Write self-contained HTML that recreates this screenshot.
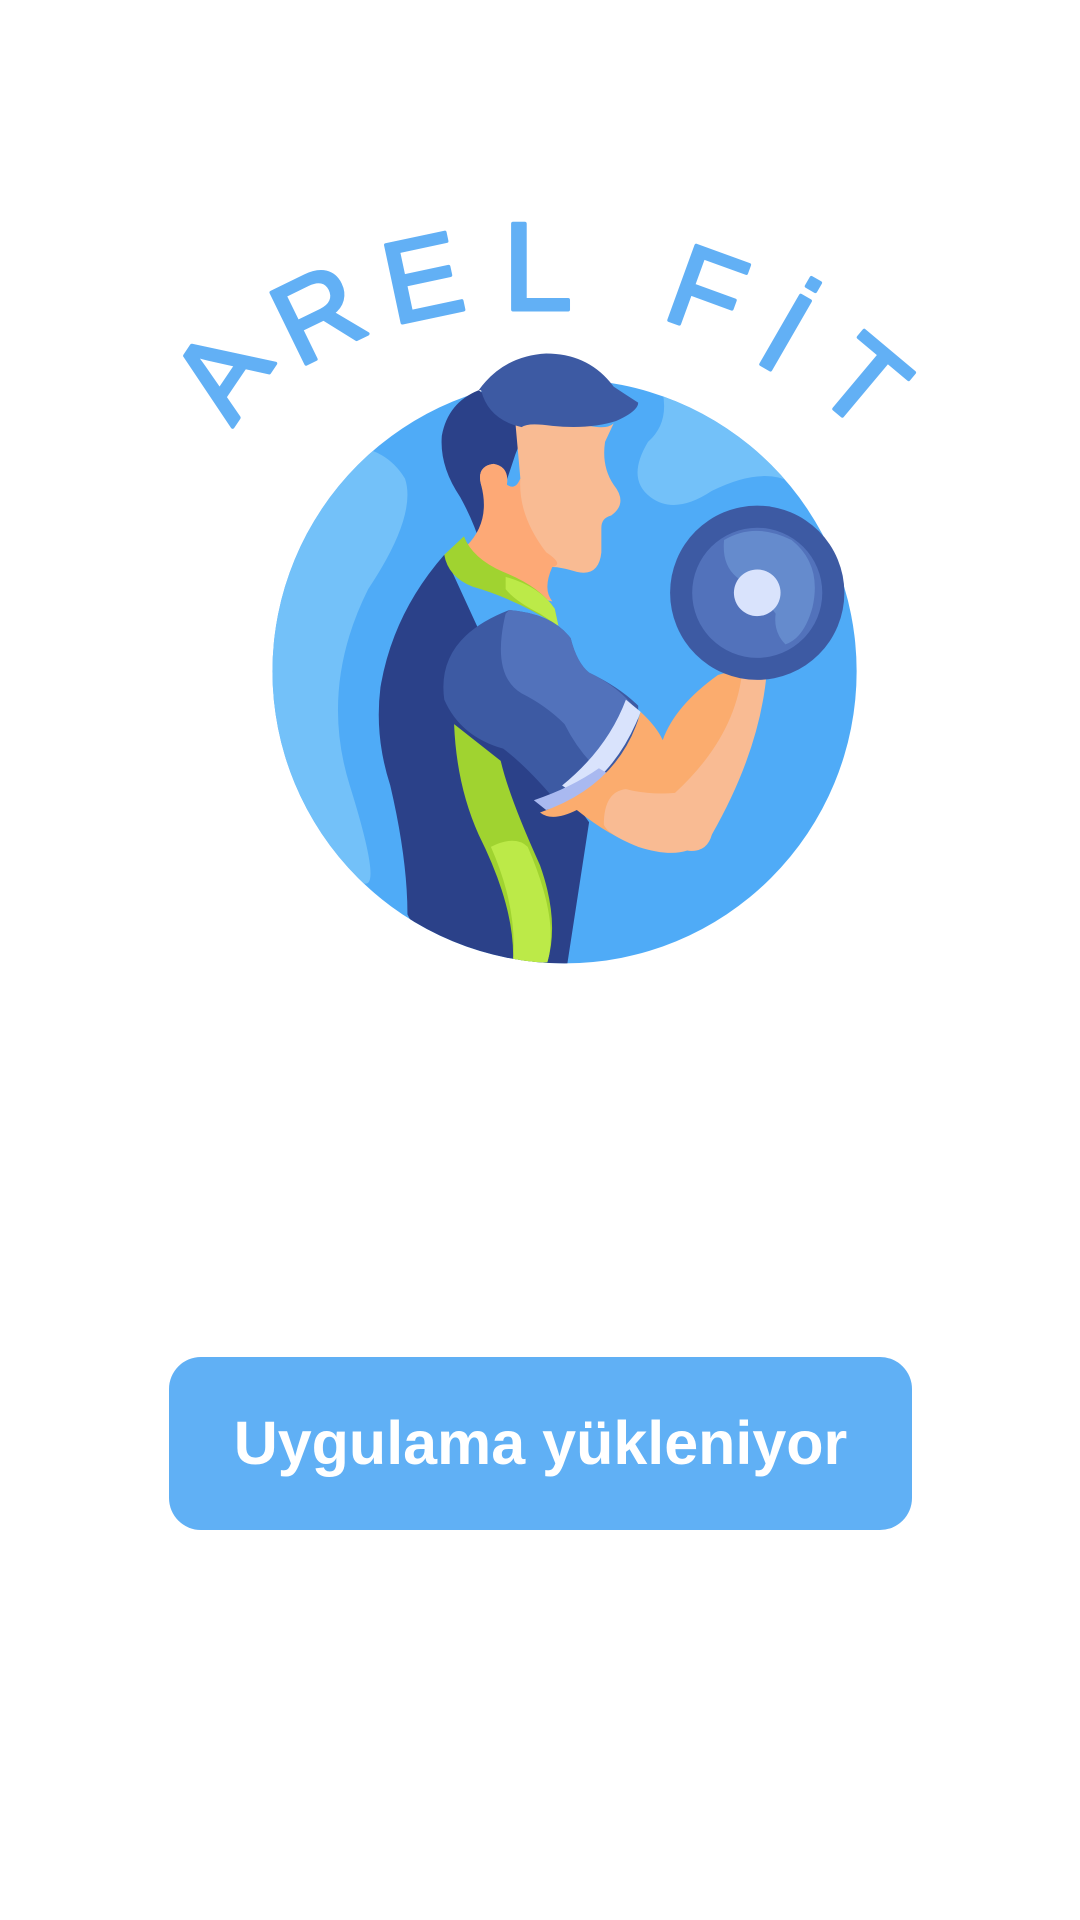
<!DOCTYPE html>
<html><head><meta charset="utf-8"><style>
html,body{margin:0;padding:0;background:#fff;width:1080px;height:1920px;overflow:hidden}
svg{position:absolute;left:0;top:0}
.btn{position:absolute;left:169px;top:1357px;width:743px;height:173px;background:#60b0f5;border-radius:32px;color:#fff;font-family:"Liberation Sans",sans-serif;font-weight:bold;font-size:61px;text-align:center;line-height:173px;letter-spacing:0px}
</style></head><body>
<svg width="1080" height="1920" viewBox="0 0 880 1564.4">
<defs><clipPath id="c"><circle cx="460" cy="547" r="238"/></clipPath></defs>
<g font-family="Liberation Sans,sans-serif" font-size="94" fill="#62b0f5" stroke="#62b0f5" stroke-width="3" stroke-linejoin="round" text-anchor="middle">
<text transform="translate(207,322) rotate(-56)">A</text>
<text transform="translate(273,285) rotate(-26)">R</text>
<text transform="translate(351,258) rotate(-12)">E</text>
<text transform="translate(438,252) scale(1.08)">L</text>
<text transform="translate(565,268) rotate(20)">F</text>
<text transform="translate(624,299) rotate(30)">İ</text>
<text transform="translate(683,336) rotate(40)">T</text>
</g>
<circle cx="460" cy="547" r="238" fill="#4fabf7"/>
<g clip-path="url(#c)">
<path d="M200 380 Q300 340 330 390 Q340 420 300 480 Q260 560 285 640 Q310 720 298 720 L200 720Z" fill="#73c1f9"/>
<path d="M540 320 Q545 345 528 360 Q510 390 530 405 Q550 420 580 400 Q620 380 645 393 L700 393 L700 300Z" fill="#73c1f9"/>
<path d="M362 452 Q320 500 310 560 Q305 600 318 640 Q332 700 332 745 L360 800 L460 800 L480 670 L430 600 Z" fill="#2b4189"/>
<path d="M370 590 Q372 640 390 680 Q420 740 418 784 L446 784 Q456 750 440 705 Q415 650 408 620Z" fill="#a0d330"/>
<path d="M400 690 Q420 680 430 690 Q456 750 446 784 L418 784 Q422 740 400 690Z" fill="#bcea48"/>
</g>
<path d="M390 318 Q365 328 360 355 Q358 380 375 405 Q386 425 392 445 L400 430 L420 370 L430 345Z" fill="#2b4189"/>
<path d="M420 345 Q440 340 480 347 Q495 350 500 345 L493 360 Q490 380 500 395 Q512 410 498 420 Q490 422 490 430 L490 450 Q488 470 470 466 Q450 460 446 463 Q442 480 450 490 L410 480 L395 430 Q400 410 392 395 Q388 380 402 378 Q415 380 413 395 Q420 400 424 390Z" fill="#f9bb93"/>
<path d="M392 395 Q388 380 402 378 Q415 380 413 395 Q420 400 424 390 Q422 420 445 450 Q460 460 450 462 Q442 480 450 490 L385 462 L380 445 Q400 425 392 395Z" fill="#fda976"/>
<path d="M390 318 Q410 290 445 288 Q480 288 500 315 Q512 323 520 328 Q520 335 502 343 Q480 350 450 347 Q430 344 425 348 Q398 342 392 318Z" fill="#3d5aa3"/>
<path d="M362 452 L378 437 Q385 455 410 466 Q440 478 452 496 L455 510 Q420 488 385 478 Q365 470 362 452Z" fill="#a0d330"/>
<path d="M412 470 Q440 478 452 496 L455 510 L440 500 Q420 490 412 480Z" fill="#bcea48"/>
<path d="M415 497 Q450 500 465 520 Q470 540 480 548 Q505 560 520 575 L520 590 Q500 640 455 655 Q430 625 410 610 Q375 600 362 570 Q355 520 415 497Z" fill="#3d5aa3"/>
<path d="M415 497 Q450 500 465 520 Q470 540 480 548 Q505 560 518 578 Q505 605 485 625 Q470 610 460 590 Q445 575 425 565 Q400 550 412 500Z" fill="#5272bb"/>
<path d="M510 570 L522 580 Q505 625 470 648 L458 640 Q495 610 510 570Z" fill="#d9e3fc"/>
<path d="M488 626 L498 632 Q470 655 445 660 L435 652 Q465 642 488 626Z" fill="#a9b9f0"/>
<path d="M522 580 Q535 592 540 603 Q550 575 585 550 L620 540 Q615 600 580 680 Q575 695 560 693 Q545 693 520 688 Q500 684 470 660 Q450 670 440 662 Q505 640 522 580Z" fill="#fbac6e"/>
<path d="M605 545 L625 545 Q620 610 580 680 Q576 695 560 693 Q545 698 520 690 Q495 680 492 672 Q492 645 510 643 Q530 648 550 646 Q600 600 605 545Z" fill="#f9bb93"/>
<circle cx="617" cy="483" r="71" fill="#3d5aa3"/>
<circle cx="617" cy="483" r="53" fill="#5272bb"/>
<path d="M590 440 Q615 425 645 440 Q670 460 662 495 Q655 520 640 525 Q630 515 632 500 Q625 490 600 470 Q588 460 590 440Z" fill="#658bcd"/>
<circle cx="617" cy="483" r="19" fill="#d9e3fc"/>
</svg>
<div class="btn">Uygulama yükleniyor</div>
</body></html>
